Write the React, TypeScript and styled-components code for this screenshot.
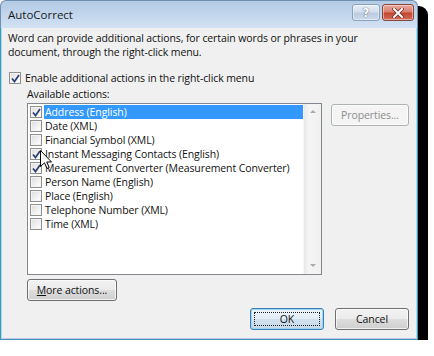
import React from "react";
import styled, { createGlobalStyle } from "styled-components";

const GlobalStyle = createGlobalStyle`
  body {
    margin: 0;
    background: #fff;
    font-family: "Open Sans", "Liberation Sans", sans-serif;
    color: #111;
  }
`;

const Window = styled.div`
  position: relative;
  z-index: 0;
  width: 418px;
  height: 340px;
  display: flex;
  flex-direction: column;

  &::before {
    content: "";
    position: absolute;
    left: 8px;
    top: 6px;
    right: -10px;
    bottom: -10px;
    background: #000;
    border-radius: 9px;
    z-index: -1;
  }
`;

const TitleBar = styled.div`
  flex: none;
  box-sizing: border-box;
  height: 28px;
  display: flex;
  align-items: flex-start;
  padding: 0 3px 0 7px;
  background: linear-gradient(180deg, #b4cbe5 0%, #c3d7ed 55%, #d2e2f3 100%);
  border: 1px solid #6d8fb1;
  border-bottom: none;
  border-radius: 6px 6px 0 0;
`;

const Title = styled.div`
  font-size: 11.5px;
  line-height: 16px;
  margin-top: 6px;
  color: #1a1a1a;
`;

const CaptionButtons = styled.div`
  margin-left: auto;
  margin-top: 3px;
  display: flex;
  gap: 2px;
`;

const CaptionButton = styled.div<{ kind: "help" | "close" }>`
  box-sizing: border-box;
  width: ${(p) => (p.kind === "close" ? 32 : 28)}px;
  height: 17px;
  border: 1px solid ${(p) => (p.kind === "close" ? "#8a4338" : "#8aa2bd")};
  border-radius: 3px;
  display: flex;
  align-items: center;
  justify-content: center;
  background: ${(p) =>
    p.kind === "close"
      ? "linear-gradient(180deg, #e8a89d 0%, #d9806f 45%, #c4452f 55%, #d0705c 100%)"
      : "linear-gradient(180deg, #e6eef7 0%, #d3dfed 45%, #bccbdf 55%, #ccdaeb 100%)"};
  box-shadow: inset 0 0 0 1px rgba(255, 255, 255, 0.45);
`;

const HelpGlyph = styled.span`
  font-family: "DejaVu Sans", sans-serif;
  font-weight: bold;
  font-size: 12px;
  line-height: 12px;
  color: #fff;
  text-shadow: 0 0 1px #51677f, 0 0 1px #51677f;
`;

const Client = styled.div`
  flex: 1;
  display: flex;
  flex-direction: column;
  padding: 3px 8px 8px 7px;
  background: #f0f0f0;
  border: 1px solid #3f98ba;
  border-top: none;
  box-shadow: inset 1px 0 #a8dcef, inset -1px 0 #a8dcef, inset 0 -1px #c9c2e8;
  font-size: 10.5px;
  letter-spacing: -0.1px;
`;

const Description = styled.p`
  margin: 0;
  line-height: 14px;
`;

const CheckRow = styled.label`
  display: flex;
  align-items: center;
  gap: 4px;
  height: 14px;
  margin: 12px 0 0 1px;
  line-height: 14px;
`;

const Box = styled.span`
  flex: none;
  box-sizing: border-box;
  width: 12px;
  height: 12px;
  border: 1px solid #8e8f8f;
  background: linear-gradient(135deg, #dcdcdc 0%, #f6f6f6 70%, #fff 100%);
  box-shadow: inset 0 0 0 1px #f4f4f4;
  display: flex;
  align-items: center;
  justify-content: center;
`;

const SectionLabel = styled.div`
  margin: 2px 0 0 19px;
  line-height: 14px;
`;

const ListArea = styled.div`
  display: flex;
  align-items: flex-start;
  margin-top: 2px;
`;

const ListBox = styled.div`
  box-sizing: border-box;
  display: flex;
  width: 296px;
  height: 172px;
  margin-left: 19px;
  border: 1px solid #828790;
  background: #fff;
`;

const Items = styled.div`
  flex: 1;
  padding: 1px 0 0 2px;
`;

const Item = styled.div`
  display: flex;
  align-items: center;
  height: 14px;
`;

const ItemText = styled.span<{ selected?: boolean }>`
  flex: 1;
  margin-left: 2px;
  padding-left: 1px;
  line-height: 14px;
  white-space: nowrap;
  background: ${(p) => (p.selected ? "#3399ff" : "transparent")};
  color: ${(p) => (p.selected ? "#fff" : "#111")};
`;

const Scrollbar = styled.div`
  flex: none;
  width: 17px;
  display: flex;
  flex-direction: column;
  justify-content: space-between;
  align-items: center;
  padding: 6px 0 7px;
  background: linear-gradient(90deg, #e9e9e9 0%, #f5f5f5 30%, #f0f0f0 100%);
  border-left: 1px solid #f7f7f7;
`;

const Arrow = styled.span<{ down?: boolean }>`
  width: 0;
  height: 0;
  border-left: 3px solid transparent;
  border-right: 3px solid transparent;
  ${(p) => (p.down ? "border-top: 3px solid #a9a9a9;" : "border-bottom: 3px solid #a9a9a9;")}
`;

const Button = styled.div<{ focused?: boolean; disabled?: boolean; w: number }>`
  box-sizing: border-box;
  width: ${(p) => p.w}px;
  height: 22px;
  display: flex;
  align-items: center;
  justify-content: center;
  border: 1px solid ${(p) => (p.focused ? "#3c7fb1" : p.disabled ? "#adb2b5" : "#707070")};
  border-radius: 3px;
  color: ${(p) => (p.disabled ? "#8d8d8d" : "#111")};
  background: ${(p) =>
    p.disabled
      ? "#f4f4f4"
      : p.focused
      ? "linear-gradient(180deg, #edf4fa 0%, #e3edf6 48%, #d2e1ee 52%, #c8d9e8 100%)"
      : "linear-gradient(180deg, #f2f2f2 0%, #ebebeb 48%, #dddddd 52%, #cfcfcf 100%)"};
  box-shadow: ${(p) =>
    p.focused ? "inset 0 0 0 1px #9ad6f5" : "inset 0 0 0 1px rgba(255,255,255,0.7)"};
`;

const FocusRing = styled.span`
  box-sizing: border-box;
  width: calc(100% - 6px);
  height: calc(100% - 6px);
  border: 1px dotted #222;
  display: flex;
  align-items: center;
  justify-content: center;
`;

const SideButtons = styled.div`
  margin: 1px 0 0 9px;
`;

const MoreRow = styled.div`
  margin: 4px 0 0 19px;
`;

const Footer = styled.div`
  display: flex;
  justify-content: flex-end;
  gap: 11px;
  margin-top: 7px;
`;

const Cursor = styled.svg`
  position: absolute;
  left: 40px;
  top: 150px;
`;

const Check = () => (
  <svg width="9" height="9" viewBox="0 0 9 9">
    <path d="M1 4.5 L3.5 7.5 L8 1" fill="none" stroke="#2c3f73" strokeWidth="1.7" />
  </svg>
);

const actions = [
  { name: "Address (English)", checked: true, selected: true },
  { name: "Date (XML)" },
  { name: "Financial Symbol (XML)" },
  { name: "Instant Messaging Contacts (English)", checked: true },
  { name: "Measurement Converter (Measurement Converter)", checked: true },
  { name: "Person Name (English)" },
  { name: "Place (English)" },
  { name: "Telephone Number (XML)" },
  { name: "Time (XML)" },
];

export default function App(): JSX.Element {
  return (
    <>
      <GlobalStyle />
      <Window>
        <TitleBar>
          <Title>AutoCorrect</Title>
          <CaptionButtons>
            <CaptionButton kind="help">
              <HelpGlyph>?</HelpGlyph>
            </CaptionButton>
            <CaptionButton kind="close">
              <svg width="12" height="10" viewBox="0 0 12 10">
                <path d="M2 1 L10 9 M10 1 L2 9" stroke="#6a2a20" strokeWidth="3.4" strokeLinecap="square" />
                <path d="M2 1 L10 9 M10 1 L2 9" stroke="#fff" strokeWidth="2" strokeLinecap="square" />
              </svg>
            </CaptionButton>
          </CaptionButtons>
        </TitleBar>
        <Client>
          <Description>
            Word can provide additional actions, for certain words or phrases in your
            <br />
            document, through the right-click menu.
          </Description>
          <CheckRow>
            <Box>
              <Check />
            </Box>
            <span>Enable additional actions in the right-click menu</span>
          </CheckRow>
          <SectionLabel>Available actions:</SectionLabel>
          <ListArea>
            <ListBox>
              <Items>
                {actions.map((a) => (
                  <Item key={a.name}>
                    <Box>{a.checked && <Check />}</Box>
                    <ItemText selected={a.selected}>{a.name}</ItemText>
                  </Item>
                ))}
              </Items>
              <Scrollbar>
                <Arrow />
                <Arrow down />
              </Scrollbar>
            </ListBox>
            <SideButtons>
              <Button w={78} disabled>
                Properties...
              </Button>
            </SideButtons>
          </ListArea>
          <MoreRow>
            <Button w={90}>
              <span>
                <u>M</u>ore actions...
              </span>
            </Button>
          </MoreRow>
          <Footer>
            <Button w={74} focused>
              <FocusRing>OK</FocusRing>
            </Button>
            <Button w={74}>Cancel</Button>
          </Footer>
        </Client>
        <Cursor width="13" height="20" viewBox="0 0 13 20">
          <path
            d="M0.5 0.5 L0.5 16.5 L4.5 12.8 L7 18.5 L9.2 17.5 L6.8 12 L11.5 12 Z"
            fill="#fff"
            stroke="#000"
            strokeWidth="1"
          />
        </Cursor>
      </Window>
    </>
  );
}
